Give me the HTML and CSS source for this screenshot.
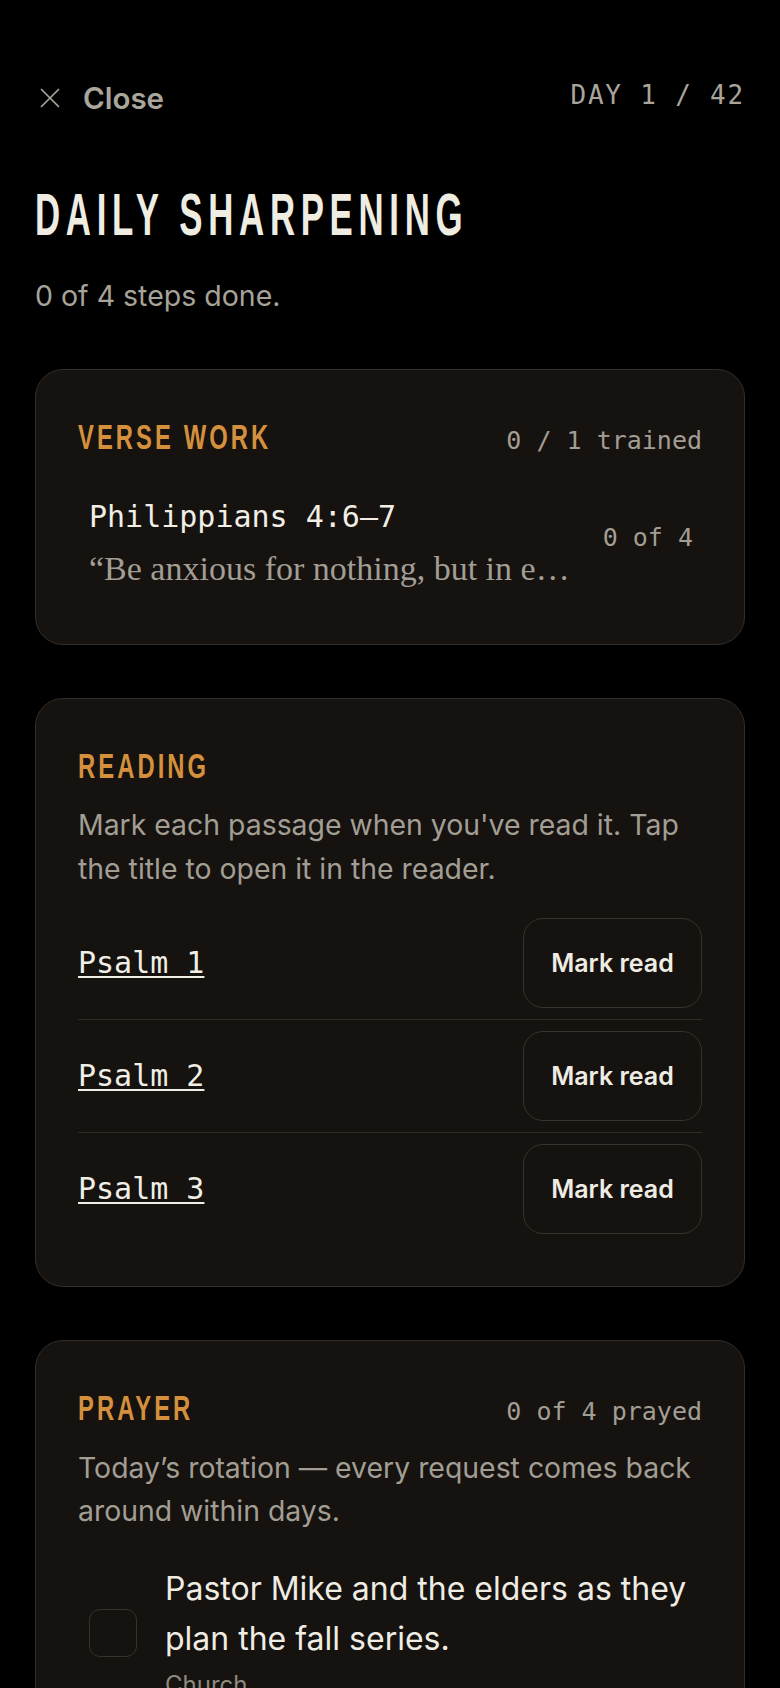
FILE: index.html
```html
<!DOCTYPE html>
<html lang="en">
<head>
<meta charset="utf-8">
<title>Daily Sharpening</title>
<link rel="stylesheet" href="styles.css">
</head>
<body>
<div class="screen">
  <header class="topbar">
    <button class="close" type="button">
      <svg class="close-icon" width="30" height="30" viewBox="0 0 30 30" aria-hidden="true">
        <path d="M6.5 6.5 L23.5 23.5 M23.5 6.5 L6.5 23.5" fill="none" stroke="currentColor" stroke-width="1.7" stroke-linecap="round"/>
      </svg>
      <span>Close</span>
    </button>
    <span class="day">DAY 1 / 42</span>
  </header>

  <h1 class="title"><span>DAILY SHARPENING</span></h1>
  <p class="progress">0 of 4 steps done.</p>

  <section class="card card-verse">
    <div class="card-head">
      <h2 class="label"><span>VERSE WORK</span></h2>
      <span class="meta">0 / 1 trained</span>
    </div>
    <button class="verse-item" type="button">
      <span class="verse-main">
        <span class="verse-ref">Philippians 4:6–7</span>
        <span class="verse-quote">“Be anxious for nothing, but in everything by prayer and supplication, with thanksgiving, let your requests be made known to God.”</span>
      </span>
      <span class="verse-count">0 of 4</span>
    </button>
  </section>

  <section class="card card-reading">
    <div class="card-head">
      <h2 class="label"><span>READING</span></h2>
    </div>
    <p class="card-desc">Mark each passage when you've read it. Tap the title to open it in the reader.</p>
    <ul class="rows">
      <li class="row"><a class="passage" href="#">Psalm 1</a><button class="mark" type="button">Mark read</button></li>
      <li class="row"><a class="passage" href="#">Psalm 2</a><button class="mark" type="button">Mark read</button></li>
      <li class="row"><a class="passage" href="#">Psalm 3</a><button class="mark" type="button">Mark read</button></li>
    </ul>
  </section>

  <section class="card card-prayer">
    <div class="card-head">
      <h2 class="label"><span>PRAYER</span></h2>
      <span class="meta">0 of 4 prayed</span>
    </div>
    <p class="card-desc">Today’s rotation — every request comes back around within days.</p>
    <ul class="prayers">
      <li class="prayer">
        <span class="check"></span>
        <span class="prayer-body">
          <span class="prayer-text">Pastor Mike and the elders as they plan the fall series.</span>
          <span class="prayer-tag">Church</span>
        </span>
      </li>
    </ul>
  </section>
</div>
</body>
</html>
```

FILE: styles.css
```css
* { box-sizing: border-box; }

html, body {
  margin: 0;
  padding: 0;
  background: #000;
}

body {
  font-family: "Inter", "Noto Sans", sans-serif;
  color: #efece3;
}

.screen {
  padding: 73px 35px 0;
  overflow: hidden;
  height: 1688px;
}

.topbar {
  display: flex;
  justify-content: space-between;
  align-items: flex-start;
  height: 50px;
}

.close {
  display: flex;
  align-items: center;
  gap: 18px;
  height: 50px;
  padding: 0;
  margin: 0;
  border: 0;
  background: none;
  color: #aaa69c;
  font-family: "Inter", sans-serif;
  font-weight: 600;
  font-size: 29.5px;
  line-height: 50px;
  cursor: pointer;
}

.close-icon { display: block; }

.day {
  font-family: "DejaVu Sans Mono", monospace;
  font-size: 26px;
  line-height: 44px;
  letter-spacing: 1.8px;
  color: #a9a59b;
}

.title {
  margin: 62px 0 0;
  height: 60px;
  font-family: "Liberation Sans", sans-serif;
  font-weight: 700;
  font-size: 60px;
  line-height: 60px;
  color: #efece2;
  white-space: nowrap;
}

.title span {
  display: inline-block;
  transform: scaleX(0.58);
  transform-origin: left center;
  letter-spacing: 9.8px;
}

.progress {
  margin: 31px 0 0;
  font-size: 28.5px;
  line-height: 40px;
  color: #a7a398;
}

.card {
  margin-top: 53px;
  background: #15120f;
  border: 1px solid #322e2a;
  border-radius: 28px;
  padding: 47px 42px 43px;
}

.card-reading { padding-bottom: 41px; }

.card-head {
  display: flex;
  justify-content: space-between;
  align-items: baseline;
  height: 40px;
}

.label {
  margin: 0;
  font-family: "Liberation Sans", sans-serif;
  font-weight: 700;
  font-size: 35px;
  line-height: 40px;
  color: #d4903d;
  white-space: nowrap;
}

.label span {
  display: inline-block;
  transform: scaleX(0.68);
  transform-origin: left center;
  letter-spacing: 4.5px;
}

.meta {
  font-family: "DejaVu Sans Mono", monospace;
  font-size: 25px;
  line-height: 40px;
  color: #a29e94;
  white-space: nowrap;
}

.verse-item {
  display: flex;
  align-items: center;
  gap: 30px;
  width: 100%;
  margin-top: 28px;
  padding: 12px 9px 12px 11px;
  border: 0;
  background: none;
  text-align: left;
  color: inherit;
  cursor: pointer;
}

.verse-main {
  flex: 1;
  min-width: 0;
  display: flex;
  flex-direction: column;
}

.verse-ref {
  font-family: "DejaVu Sans Mono", monospace;
  font-size: 30px;
  line-height: 40px;
  color: #f1eee6;
  white-space: nowrap;
}

.verse-quote {
  margin-top: 12px;
  font-family: "Liberation Serif", serif;
  font-size: 34px;
  line-height: 40px;
  color: #a29e94;
  white-space: nowrap;
  overflow: hidden;
  text-overflow: ellipsis;
}

.verse-count {
  margin-bottom: 11px;
  font-family: "DejaVu Sans Mono", monospace;
  font-size: 25px;
  line-height: 40px;
  color: #a29e94;
  white-space: nowrap;
}

.card-desc {
  margin: 17px 0 0;
  font-size: 28.4px;
  line-height: 43.5px;
  color: #a29e94;
}

.card-prayer .card-desc {
  margin-top: 18px;
  line-height: 43px;
}

.rows {
  list-style: none;
  margin: 17px 0 0;
  padding: 0;
}

.row {
  display: flex;
  justify-content: space-between;
  align-items: center;
  padding: 11px 0;
  border-bottom: 1px solid #2f2b27;
}

.row:last-child { border-bottom: 0; }

.passage {
  font-family: "DejaVu Sans Mono", monospace;
  font-size: 30px;
  line-height: 40px;
  color: #f1eee6;
  text-decoration: underline;
  text-decoration-thickness: 2px;
  text-underline-offset: 3px;
}

.mark {
  width: 179px;
  height: 90px;
  padding: 0;
  border: 1.5px solid #36322d;
  border-radius: 20px;
  background: #15120f;
  color: #efece3;
  font-family: "Inter", sans-serif;
  font-weight: 600;
  font-size: 25px;
  text-align: center;
  cursor: pointer;
}

.prayers {
  list-style: none;
  margin: 18px 0 0;
  padding: 0;
}

.prayer {
  display: flex;
  align-items: center;
  gap: 28px;
  padding: 14px 0 14px 11px;
}

.check {
  flex: none;
  width: 48px;
  height: 48px;
  border: 1.5px solid #36322d;
  border-radius: 11px;
}

.prayer-body {
  display: flex;
  flex-direction: column;
  min-width: 0;
}

.prayer-text {
  font-size: 32px;
  line-height: 50px;
  color: #efece3;
}

.prayer-tag {
  margin-top: 4px;
  font-size: 24px;
  line-height: 34px;
  color: #8e8a80;
}
```
